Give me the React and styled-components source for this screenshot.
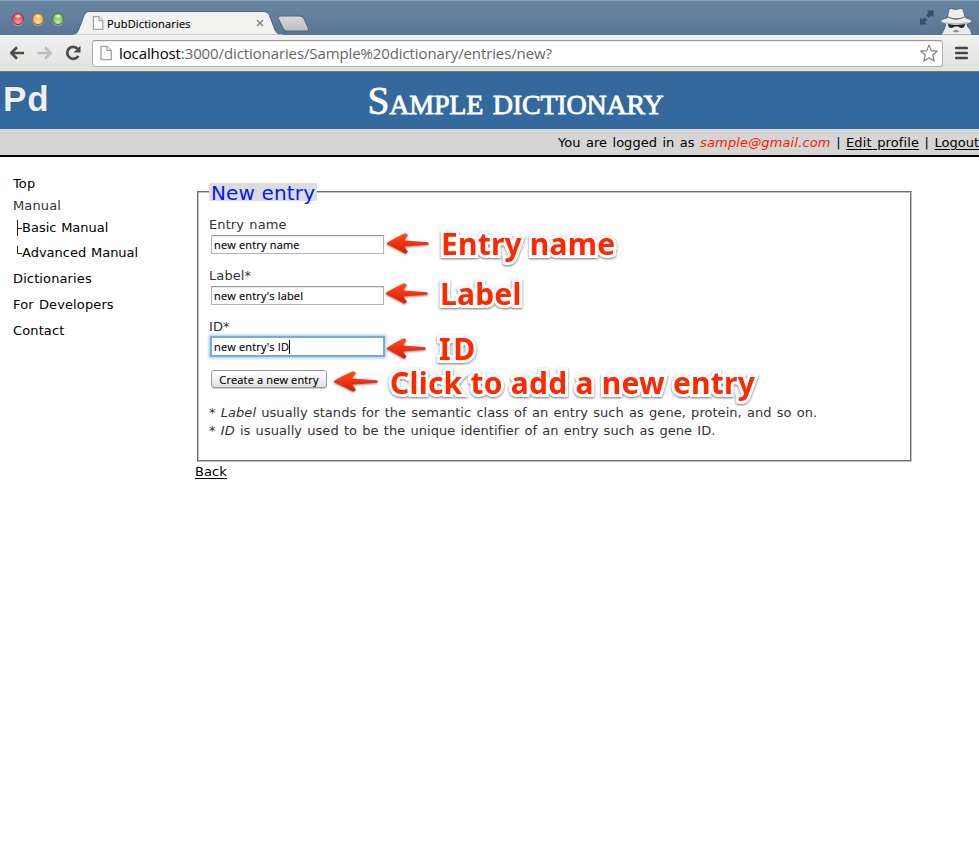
import React from "react";
import styled, { createGlobalStyle } from "styled-components";

const GlobalStyle = createGlobalStyle`
  *, *::before, *::after { box-sizing: border-box; }
  html, body { margin: 0; background: #fff; }
  body { font: 13px/18px "DejaVu Sans", Verdana, sans-serif; color: #333; overflow: hidden; }
`;

const uiFont = `"Open Sans", "Noto Sans", sans-serif`;

const Window = styled.div`
  width: 979px;
  height: 855px;
  display: flex;
  flex-direction: column;
  overflow: hidden;
  background: #fff;
`;

/* ---------- browser chrome ---------- */
const TitleBar = styled.div`
  height: 35px;
  flex: none;
  display: flex;
  align-items: flex-end;
  background: linear-gradient(#b5c5d5 0, #67829f 1px, #65809e 45%, #597494 100%);
`;
const Lights = styled.div`
  display: flex;
  gap: 8px;
  padding: 0 0 10px 12px;
  width: 76px;
`;
const Light = styled.span`
  width: 12px;
  height: 12px;
  border-radius: 50%;
  border: 1px solid ${(p) => p.$edge};
  background: radial-gradient(ellipse 4px 2.5px at 50% 22%, rgba(255, 255, 255, 0.95), transparent),
    radial-gradient(circle at 50% 85%, ${(p) => p.$glow}, ${(p) => p.$color} 75%);
  box-shadow: 0 1px 0 rgba(255, 255, 255, 0.35);
`;
const Tab = styled.div`
  position: relative;
  width: 203px;
  height: 24px;
  display: flex;
  align-items: center;
  padding: 0 15px 0 16px;
`;
const TabShape = styled.svg`
  position: absolute;
  left: -3px;
  top: 0;
`;
const TabTitle = styled.span`
  position: relative;
  flex: 1;
  margin-left: 3px;
  padding-top: 1px;
  font: 11px/24px ${uiFont};
  letter-spacing: 0.18px;
  color: #000;
  -webkit-text-stroke: 0.15px #000;
`;
const PageIcon = styled.svg`
  position: relative;
  flex: none;
`;
const CloseIcon = styled.svg`
  position: relative;
`;
const NewTab = styled.svg`
  margin: 0 0 3px -2px;
`;
const WindowExtras = styled.div`
  margin-left: auto;
  display: flex;
  align-items: flex-end;
  gap: 5px;
  padding-right: 6px;
`;
const FullScreen = styled.svg`
  margin-bottom: 9px;
`;
const Toolbar = styled.div`
  height: 37px;
  flex: none;
  display: flex;
  align-items: center;
  padding: 0 9px 0 9px;
  background: linear-gradient(#f1f1f0, #e1e1e0);
  border-bottom: 1px solid #77796f;
`;
const NavIcons = styled.div`
  display: flex;
  align-items: center;
  gap: 12px;
  width: 83px;
`;
const AddressBar = styled.div`
  width: 851px;
  height: 27px;
  display: flex;
  align-items: center;
  padding: 0 4px 0 7px;
  background: #fff;
  border: 1px solid #b0b0b0;
  border-top-color: #999;
  border-radius: 3px;
  box-shadow: inset 0 1px 1px rgba(0, 0, 0, 0.08);
`;
const Url = styled.span`
  flex: 1;
  margin-left: 7px;
  font: 15px/24px ${uiFont};
  letter-spacing: -0.11px;
  color: #666;
  white-space: nowrap;
`;
const Host = styled.span`
  color: #000;
`;
const MenuIcon = styled.svg`
  margin-left: 12px;
`;

/* ---------- page ---------- */
const Banner = styled.header`
  height: 57px;
  flex: none;
  display: flex;
  align-items: center;
  background: #34699d;
`;
const Logo = styled.div`
  width: 90px;
  padding: 0 0 4px 3px;
  font: bold 35px/54px "Liberation Sans", Arial, sans-serif;
  letter-spacing: 1px;
  color: #eef0f3;
  text-shadow: 0 0 1px rgba(30, 50, 90, 0.6);
`;
const Title = styled.h1`
  flex: 1;
  margin: 0;
  padding: 1px 38px 0 0;
  text-align: center;
  font: 39.5px/54px "Liberation Serif", "Times New Roman", serif;
  font-variant: small-caps;
  letter-spacing: -0.2px;
  color: #fff;
  -webkit-text-stroke: 0.8px #fff;
`;
const UserBar = styled.div`
  height: 28px;
  flex: none;
  display: flex;
  justify-content: flex-end;
  background: #d5d5d5;
  border-bottom: 2px solid #000;
  color: #000;
  line-height: 27px;
  white-space: pre;
  word-spacing: 1.4px;
`;
const Email = styled.em`
  color: #ff1800;
  letter-spacing: 0.14px;
`;
const Link = styled.a`
  color: #000;
  text-decoration: underline;
  text-underline-offset: 1.5px;
`;
const ProfileLink = styled(Link)`
  letter-spacing: 0.1px;
`;
const Columns = styled.div`
  display: flex;
  align-items: flex-start;
`;
const Sidebar = styled.nav`
  width: 195px;
  padding: 17px 0 0 13px;
  display: flex;
  flex-direction: column;
  color: #000;
`;
const NavItem = styled.a`
  display: flex;
  height: ${(p) => p.$h || 26}px;
  line-height: 20px;
  color: ${(p) => (p.$muted ? "#333" : "#000")};
  letter-spacing: 0.12px;
  word-spacing: 1px;
`;
const SubItem = styled(NavItem)`
  padding-left: 3px;
  letter-spacing: 0;
  word-spacing: 0.6px;
`;
const Branch = styled.svg`
  flex: none;
  width: 6px;
  margin-top: 2px;
`;
const Main = styled.main`
  padding-top: 26px;
`;
const EntryForm = styled.fieldset`
  width: 715px;
  height: 279px;
  margin: 0 0 0 2px;
  padding: 15px 0 0 10px;
  border: 2px groove #c0c0c0;
  position: relative;
`;
const Legend = styled.legend`
  height: 18px;
  padding: 0 2px;
  background: #dcdcdc;
  color: #0018ff;
  font-size: 20px;
  line-height: 20px;
  letter-spacing: 0.14px;
`;
const Field = styled.div`
  height: 51px;
  display: flex;
  flex-direction: column;
  position: relative;
`;
const FieldLabel = styled.label`
  height: 19px;
  line-height: 18px;
  letter-spacing: 0.1px;
  word-spacing: 1px;
`;
const Input = styled.div`
  width: 173px;
  height: 19px;
  margin-left: 2px;
  padding-left: 2px;
  display: flex;
  align-items: center;
  background: #fff;
  border: 1px solid #b4b4b4;
  border-top: 1px solid #9c9c9c;
  outline: ${(p) => (p.$focus ? "2px solid #7aaade" : "none")};
  outline-offset: -1px;
  box-shadow: ${(p) => (p.$focus ? "0 0 3px 2px #9cc3ee" : "inset 0 1px 0 #e4e4e4")};
  font: 11px/17px ${uiFont};
  letter-spacing: 0.17px;
  color: #000;
  -webkit-text-stroke: 0.15px #000;
`;
const Caret = styled.i`
  width: 1px;
  height: 14px;
  background: #000;
`;
const ButtonRow = styled.div`
  position: relative;
  height: 34px;
  display: flex;
  margin-top: 1px;
`;
const Submit = styled.button`
  width: 116px;
  height: 18px;
  margin-left: 2px;
  padding: 1px 0 0;
  border: 1px solid #9a9a9a;
  border-radius: 3px;
  background: linear-gradient(#fff, #f1f1f1 50%, #e2e2e2);
  box-shadow: 0 1px 0 #ccc;
  font: 11px/16px ${uiFont};
  letter-spacing: 0.14px;
  color: #000;
  -webkit-text-stroke: 0.15px #000;
`;
const Note = styled.p`
  margin: 0;
  line-height: 18px;
  letter-spacing: 0.04px;
  word-spacing: 1.05px;
  white-space: nowrap;
`;
const BackLink = styled(Link)`
  display: block;
  width: max-content;
  letter-spacing: 0.1px;
  line-height: 20px;
`;

/* ---------- callouts laid over the form ---------- */
const Arrow = styled.svg`
  position: absolute;
  left: ${(p) => p.$x}px;
  top: ${(p) => p.$y}px;
  overflow: visible;
  filter: drop-shadow(0 1px 1px rgba(0, 0, 0, 0.45));
`;
const Callout = styled.span`
  position: absolute;
  left: ${(p) => p.$x}px;
  top: ${(p) => p.$y}px;
  z-index: 2;
  font: bold 30px/30px "Noto Sans", sans-serif;
  letter-spacing: ${(p) => p.$ls}px;
  color: #ff2600;
  white-space: nowrap;
  -webkit-text-stroke: 6px #fff;
  paint-order: stroke fill;
  stroke-linejoin: round;
  filter: drop-shadow(0 1px 1px rgba(0, 0, 0, 0.55));
`;

function Pointer({ x, y, w = 42 }) {
  return (
    <Arrow $x={x} $y={y} width={w} height="21" viewBox="0 0 42 21" preserveAspectRatio="none">
      <defs>
        <linearGradient id="arrowRed" x1="0" y1="0" x2="0" y2="1">
          <stop offset="0" stopColor="#ff4a26" />
          <stop offset="0.55" stopColor="#f0300f" />
          <stop offset="1" stopColor="#d41e04" />
        </linearGradient>
      </defs>
      <path
        d="M0.5 9.5Q9 4.5 17.5 0.6Q20.5 0 20.7 2.6Q18.5 5 17.5 7.6L41 9.2Q42.5 10.5 41 11.7L17.5 13.4Q18.5 16 20.7 18Q20.5 21 17.5 20.3Q9 15.5 0.5 11.5Q-0.6 10.5 0.5 9.5Z"
        fill="url(#arrowRed)"
      />
    </Arrow>
  );
}

function Page({ w, h }) {
  return (
    <PageIcon width={w} height={h} viewBox="0 0 12 15">
      <path d="M1 .7H7L11.2 5V14.3H1Z" fill="#fafafa" stroke="#919191" strokeWidth="1.1" />
      <path d="M7 .7V5H11.2" fill="#eee" stroke="#919191" strokeWidth="1" />
    </PageIcon>
  );
}

export default function App() {
  return (
    <Window>
      <GlobalStyle />
      <TitleBar>
        <Lights>
          <Light $color="#d9403f" $glow="#ff9d97" $edge="#8d3b45" />
          <Light $color="#eba637" $glow="#ffe88a" $edge="#94703f" />
          <Light $color="#6fb84b" $glow="#c6f09c" $edge="#4c7a4b" />
        </Lights>
        <Tab>
          <TabShape width="210" height="24" viewBox="0 0 210 24">
            <path d="M0 24Q4 23 5.5 19L11 4.500Q12.500 .5 16 .5H191Q195 .5 196.500 4.500L202 19Q204 23 208 24Z" fill="#f1f1f0" stroke="#4a6180" strokeWidth="1" />
            <path d="M0 24H210" stroke="#f1f1f0" />
          </TabShape>
          <Page w={12} h={14} />
          <TabTitle>PubDictionaries</TabTitle>
          <CloseIcon width="8" height="8" viewBox="0 0 8 8">
            <path d="M1 1L7 7M7 1L1 7" stroke="#858585" strokeWidth="1.5" />
          </CloseIcon>
        </Tab>
        <NewTab width="33" height="17" viewBox="0 0 32 16" preserveAspectRatio="none">
          <defs>
            <linearGradient id="newTab" x1="0" y1="0" x2="0" y2="1">
              <stop offset="0" stopColor="#d8d8d8" />
              <stop offset="1" stopColor="#bfbfc0" />
            </linearGradient>
          </defs>
          <path d="M3 .8H22Q25 .8 26.300 3.500L30.500 13Q31 15 29 15H9Q7 15 6 13L1.200 3Q.5 1 3 .8Z" fill="url(#newTab)" stroke="#4e6786" />
        </NewTab>
        <WindowExtras>
          <FullScreen width="16" height="17" viewBox="0 0 16 17">
            <path d="M7.500 1.500H14.500V8.500L12.300 6.300L9.700 8.900L7.200 6.300L9.700 3.700ZM1 8.500L3.200 10.700L5.600 8.300L8.100 10.800L5.700 13.300L7.900 15.500H1Z" fill="#3a4d65" />
          </FullScreen>
          <svg width="33" height="27" viewBox="0 0 32 27" preserveAspectRatio="none">
            <path d="M7 10L8.500 2Q9 .5 11 .5L15 1.500L20 .5Q22 .5 22.500 2L24.500 9.500Q29.500 11 31 13Q29.500 15.300 26 16L27 19Q30 21 31 27H1L4.500 20.500L5.500 16Q1 15 .5 12.500Q3 10.500 7 10Z" fill="#ececec" stroke="#495a6e" strokeWidth=".8" />
            <path d="M8 8.500Q15.500 12.200 23.500 8.500L23.800 9.500Q15.500 13.800 7.700 9.500Z" fill="#666" />
            <path d="M4.500 14Q15.500 16.500 27 14L26 15.800Q15.500 17.800 5.500 15.500Z" fill="#b5b5b5" />
            <path d="M7.500 16Q15.500 18 24.500 16L23.500 19Q20 21 17.500 18.500H14.500Q11 21 8.500 19Z" fill="#262626" />
            <path d="M12 23.500L15.500 21.500L19 23.500L16 24.500Z" fill="#8a8a8a" />
          </svg>
        </WindowExtras>
      </TitleBar>
      <Toolbar>
        <NavIcons>
          <svg width="16" height="14" viewBox="0 0 16 14">
            <path d="M15 7H3M8 1.300L2.200 7L8 12.700" fill="none" stroke="#4b4b4b" strokeWidth="2.600" strokeLinejoin="round" />
          </svg>
          <svg width="16" height="14" viewBox="0 0 16 14">
            <path d="M.5 7H13M8 1.300L13.800 7L8 12.700" fill="none" stroke="#bdbdbd" strokeWidth="2.500" strokeLinejoin="round" />
          </svg>
          <svg width="16" height="16" viewBox="0 0 16 16">
            <path d="M12.700 3.800A6 6 0 1 0 13.300 11" fill="none" stroke="#4b4b4b" strokeWidth="2.700" />
            <path d="M15.500 .8V7.500H8.500Z" fill="#4b4b4b" />
          </svg>
        </NavIcons>
        <AddressBar>
          <Page w={12} h={16} />
          <Url>
            <Host>localhost</Host>:3000/dictionaries/Sample%20dictionary/entries/new?
          </Url>
          <svg width="18" height="18" viewBox="0 0 18 18">
            <path d="M9 1L11.300 6.600L17.300 7.100L12.700 11L14.200 17L9 13.800L3.800 17L5.300 11L.7 7.100L6.700 6.600Z" fill="#fff" stroke="#7c7c7c" strokeWidth="1.100" strokeLinejoin="round" />
          </svg>
        </AddressBar>
        <MenuIcon width="13" height="14" viewBox="0 0 13 14">
          <path d="M1.300 2H11.700M1.300 7H11.700M1.300 12H11.700" stroke="#454545" strokeWidth="2.700" strokeLinecap="round" />
        </MenuIcon>
      </Toolbar>

      <Banner>
        <Logo>Pd</Logo>
        <Title>Sample dictionary</Title>
      </Banner>
      <UserBar>
        {"You are logged in as "}
        <Email>sample@gmail.com</Email>
        {" | "}
        <ProfileLink>Edit profile</ProfileLink>
        {" | "}
        <Link>Logout</Link>
      </UserBar>

      <Columns>
        <Sidebar>
          <NavItem $h={22}>Top</NavItem>
          <NavItem $h={22} $muted>Manual</NavItem>
          <SubItem $h={25}>
            <Branch height="16" viewBox="0 0 6 16">
              <path d="M1.500 0V16M1.500 8.500H6" stroke="#222" fill="none" />
            </Branch>
            Basic Manual
          </SubItem>
          <SubItem>
            <Branch height="16" viewBox="0 0 6 16">
              <path d="M1.500 1V8.500H6" stroke="#222" fill="none" />
            </Branch>
            Advanced Manual
          </SubItem>
          <NavItem>Dictionaries</NavItem>
          <NavItem>For Developers</NavItem>
          <NavItem>Contact</NavItem>
        </Sidebar>

        <Main>
          <EntryForm>
            <Legend>New entry</Legend>
            <Field>
              <FieldLabel>Entry name</FieldLabel>
              <Input>new entry name</Input>
              <Pointer x={178} y={17} />
              <Callout $x={232} $y={13} $ls={0.2}>Entry name</Callout>
            </Field>
            <Field>
              <FieldLabel>Label*</FieldLabel>
              <Input>new entry's label</Input>
              <Pointer x={177} y={16} />
              <Callout $x={231} $y={12} $ls={0.2}>Label</Callout>
            </Field>
            <Field>
              <FieldLabel>ID*</FieldLabel>
              <Input $focus>
                new entry's ID
                <Caret />
              </Input>
              <Pointer x={178} y={20} w={39} />
              <Callout $x={230} $y={16} $ls={2.6}>ID</Callout>
            </Field>
            <ButtonRow>
              <Submit>Create a new entry</Submit>
              <Pointer x={125} y={1} w={44} />
              <Callout $x={181} $y={-2} $ls={0.24}>Click to add a new entry</Callout>
            </ButtonRow>
            <Note>
              * <em>Label</em> usually stands for the semantic class of an entry such as gene, protein, and so on.
            </Note>
            <Note>
              * <em>ID</em> is usually used to be the unique identifier of an entry such as gene ID.
            </Note>
          </EntryForm>
          <BackLink>Back</BackLink>
        </Main>
      </Columns>
    </Window>
  );
}
